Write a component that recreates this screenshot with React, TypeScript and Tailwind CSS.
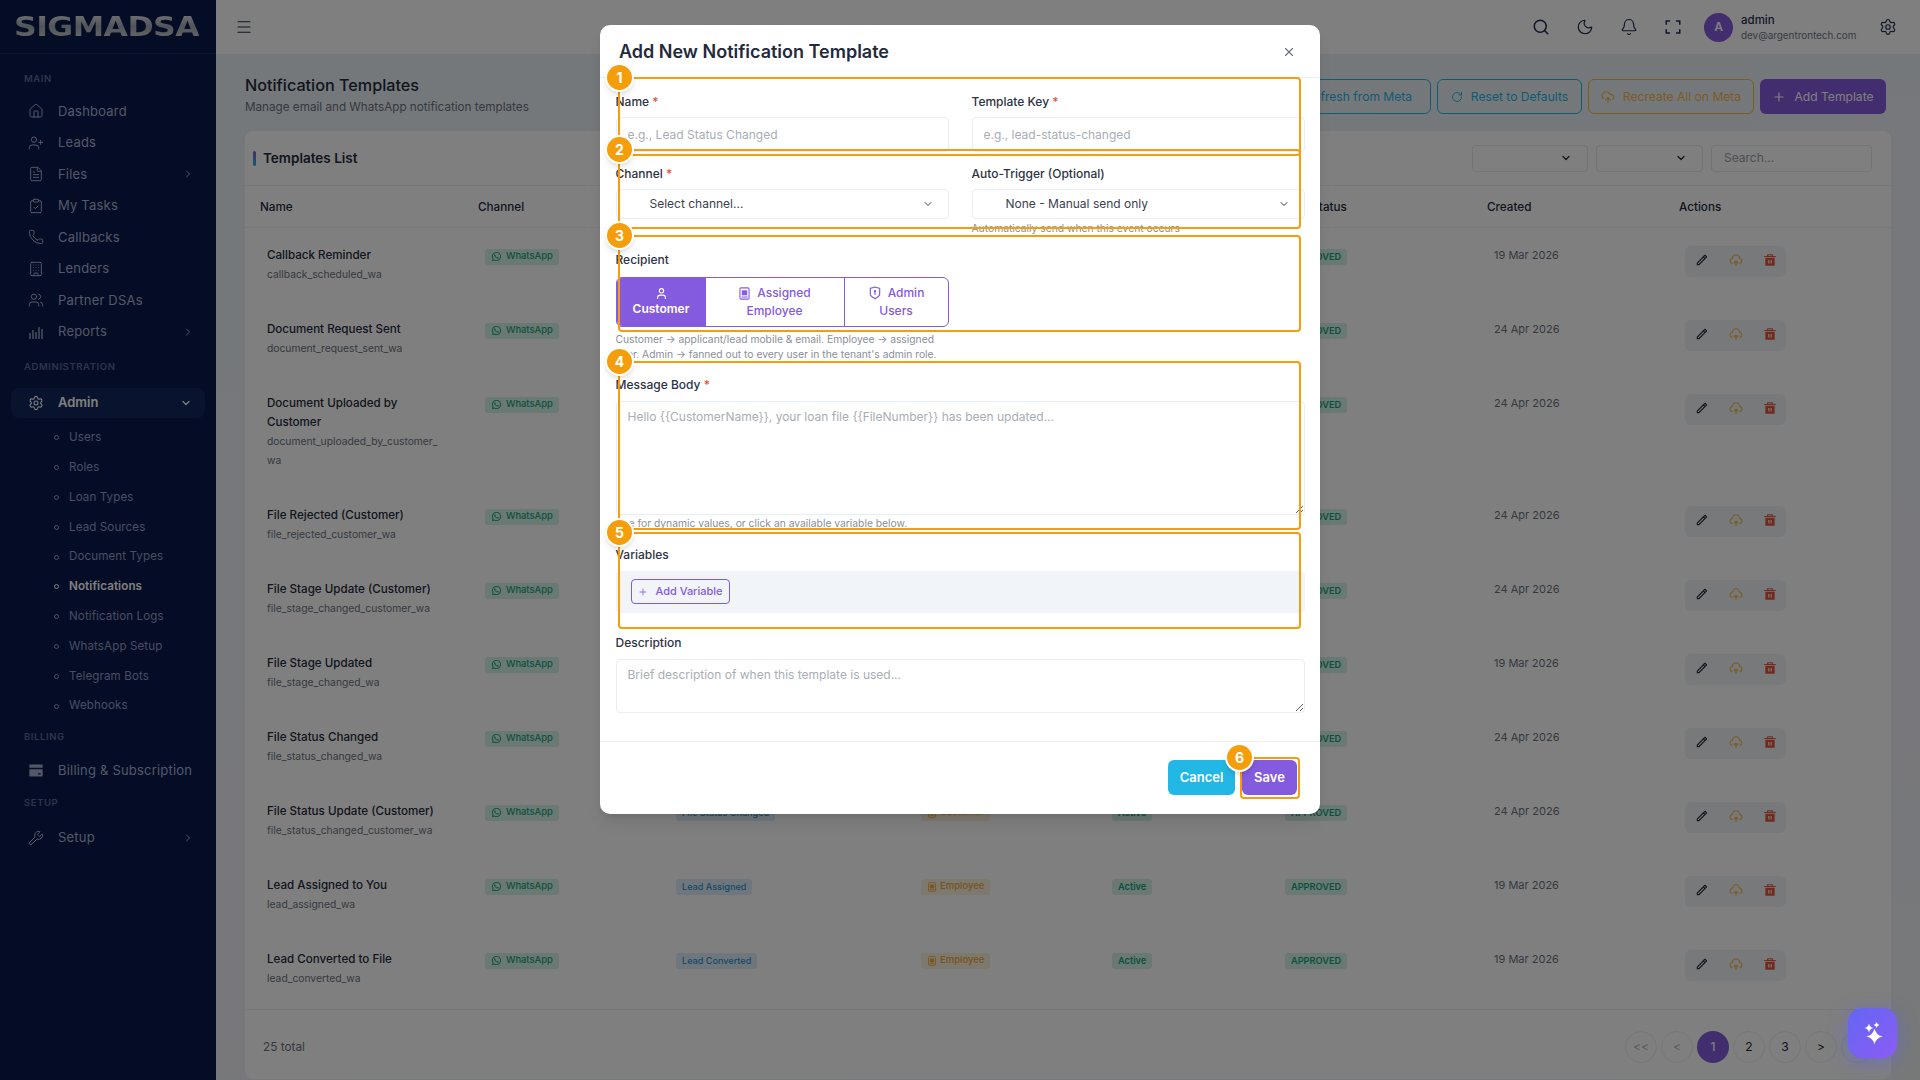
import React from "react";
import {
  House, UserPlus, FileText, ClipboardCheck, Phone, Building, Users, Settings, Wrench, ChevronRight, ChevronDown,
  Menu, Search, Moon, Bell, Plus, X, RotateCw, CloudUpload, RefreshCw, User,
} from "lucide-react";
import { RiWhatsappLine, RiPencilLine, RiUploadCloud2Line, RiDeleteBin5Fill, RiBankCardFill, RiFullscreenLine, RiShieldKeyholeLine } from "react-icons/ri";

function Bars() {
  return (
    <svg width="16" height="16" viewBox="0 0 16 16" fill="none" stroke="currentColor" strokeWidth="1.3">
      <path d="M2 15V9M5 15V6M8 15V8M11 15V3M14 15V5" />
    </svg>
  );
}

function IdBadge({ size = 12 }: { size?: number }) {
  return (
    <svg width={size} height={size} viewBox="0 0 12 12" fill="none" stroke="currentColor" strokeWidth="1">
      <rect x="1.8" y="0.8" width="8.4" height="10.4" rx="1" />
      <rect x="4" y="3.6" width="4" height="3.6" fill="currentColor" />
      <path d="M3.2 9.2h5.6" />
    </svg>
  );
}

function star(cx: number, cy: number, r: number) {
  const k = r * 0.18;
  return `M${cx} ${cy - r}Q${cx + k} ${cy - k} ${cx + r} ${cy}Q${cx + k} ${cy + k} ${cx} ${cy + r}Q${cx - k} ${cy + k} ${cx - r} ${cy}Q${cx - k} ${cy - k} ${cx} ${cy - r}Z`;
}

function SectionLabel({ text, cls }: { text: string; cls: string }) {
  return <div className={`h-4 leading-4 pl-6 text-[9.5px] font-semibold tracking-[0.6px] text-[#5c6a92] ${cls}`}>{text}</div>;
}

function NavItem({ icon, text, chevron }: { icon: React.ReactNode; text: string; chevron?: boolean }) {
  return (
    <div className="h-[31.5px] flex items-center pl-7 pr-[22px] text-[#a4b1cf] text-[13px] tracking-[0.2px]">
      <span className="w-4 h-4 flex items-center justify-center">{icon}</span>
      <span className="ml-[14px] flex-1 whitespace-nowrap">{text}</span>
      {chevron && <ChevronRight size={12} />}
    </div>
  );
}

function SubItem({ text, active }: { text: string; active?: boolean }) {
  return (
    <div className={`h-[29.8px] flex items-center pl-[54px] text-[11.6px] tracking-[0.1px] ${active ? "text-white font-semibold" : "text-[#8e9cc2]"}`}>
      <span className={`w-[5px] h-[5px] rounded-full border ${active ? "border-white" : "border-[#8e9cc2]"}`} />
      <span className="ml-[10px]">{text}</span>
    </div>
  );
}

function Sidebar() {
  return (
    <aside className="w-[216px] shrink-0 h-full bg-[#0b1a4c]">
      <div className="h-[54px] border-b border-[#1c2b5c] flex items-center pl-[14px]">
        <span className="[font-family:'DejaVu_Sans',sans-serif] font-bold text-[27px] leading-none tracking-[-0.5px] origin-left scale-x-[1.17] text-transparent bg-clip-text bg-[linear-gradient(180deg,#e4e8ec_0%,#a2a9b1_50%,#d0d4d8_100%)]">
          SIGMADSA
        </span>
      </div>
      <div className="pt-[17px]">
        <SectionLabel text="MAIN" cls="mb-[8.5px]" />
        <NavItem icon={<House size={16} strokeWidth={1.5} />} text="Dashboard" />
        <NavItem icon={<UserPlus size={16} strokeWidth={1.5} />} text="Leads" />
        <NavItem icon={<FileText size={16} strokeWidth={1.5} />} text="Files" chevron />
        <NavItem icon={<ClipboardCheck size={16} strokeWidth={1.5} />} text="My Tasks" />
        <NavItem icon={<Phone size={16} strokeWidth={1.5} />} text="Callbacks" />
        <NavItem icon={<Building size={16} strokeWidth={1.5} />} text="Lenders" />
        <NavItem icon={<Users size={16} strokeWidth={1.5} />} text="Partner DSAs" />
        <NavItem icon={<Bars />} text="Reports" chevron />
        <SectionLabel text="ADMINISTRATION" cls="mt-[11.5px]" />
        <div className="mt-[13px] mx-[11px] h-[30px] rounded-lg bg-[#15265a] flex items-center pl-[17px] pr-[13px] text-white text-[13px] font-semibold">
          <Settings size={16} strokeWidth={1.6} />
          <span className="ml-[14px] flex-1">Admin</span>
          <ChevronDown size={12} strokeWidth={2.5} />
        </div>
        <div className="mt-[5px]">
          {["Users", "Roles", "Loan Types", "Lead Sources", "Document Types"].map((t) => <SubItem key={t} text={t} />)}
          <SubItem text="Notifications" active />
          {["Notification Logs", "WhatsApp Setup", "Telegram Bots", "Webhooks"].map((t) => <SubItem key={t} text={t} />)}
        </div>
        <SectionLabel text="BILLING" cls="mt-[8px]" />
        <div className="mt-[10px]"><NavItem icon={<RiBankCardFill size={17} />} text="Billing & Subscription" /></div>
        <SectionLabel text="SETUP" cls="mt-[9px]" />
        <div className="mt-[11px]"><NavItem icon={<Wrench size={16} strokeWidth={1.5} />} text="Setup" chevron /></div>
      </div>
    </aside>
  );
}

function Topbar() {
  return (
    <header className="h-[54px] shrink-0 bg-white flex items-center pl-[19px] pr-[23px] text-[#1f2d50]">
      <Menu size={18} strokeWidth={1.5} />
      <div className="flex-1" />
      <div className="flex items-center gap-[26px]">
        <Search size={18} strokeWidth={2} />
        <Moon size={18} strokeWidth={1.6} />
        <Bell size={18} strokeWidth={1.6} />
        <RiFullscreenLine size={18} />
      </div>
      <div className="ml-[22px] w-[29px] h-[29px] rounded-full bg-[#845adf] text-white text-[12px] font-semibold flex items-center justify-center">A</div>
      <div className="ml-[8px] w-[138px]">
        <div className="text-[11.5px] leading-[15px] font-medium text-[#1f2d50]">admin</div>
        <div className="text-[9.9px] leading-[14px] text-[#6c7689]">dev@argentrontech.com</div>
      </div>
      <Settings size={18} strokeWidth={1.6} />
    </header>
  );
}

type Row = { name: string; key: string; cat: string; rec: string; date: string };
const rows: Row[] = [
  { name: "Callback Reminder", key: "callback_scheduled_wa", cat: "Callback Scheduled", rec: "Employee", date: "19 Mar 2026" },
  { name: "Document Request Sent", key: "document_request_sent_wa", cat: "Document Requested", rec: "Customer", date: "24 Apr 2026" },
  { name: "Document Uploaded by Customer", key: "document_uploaded_by_customer_wa", cat: "Document Uploaded", rec: "Employee", date: "24 Apr 2026" },
  { name: "File Rejected (Customer)", key: "file_rejected_customer_wa", cat: "File Rejected", rec: "Customer", date: "24 Apr 2026" },
  { name: "File Stage Update (Customer)", key: "file_stage_changed_customer_wa", cat: "File Stage Changed", rec: "Customer", date: "24 Apr 2026" },
  { name: "File Stage Updated", key: "file_stage_changed_wa", cat: "File Stage Changed", rec: "Employee", date: "19 Mar 2026" },
  { name: "File Status Changed", key: "file_status_changed_wa", cat: "File Status Changed", rec: "Employee", date: "24 Apr 2026" },
  { name: "File Status Update (Customer)", key: "file_status_changed_customer_wa", cat: "File Status Changed", rec: "Customer", date: "24 Apr 2026" },
  { name: "Lead Assigned to You", key: "lead_assigned_wa", cat: "Lead Assigned", rec: "Employee", date: "19 Mar 2026" },
  { name: "Lead Converted to File", key: "lead_converted_wa", cat: "Lead Converted", rec: "Employee", date: "19 Mar 2026" },
];

const gridCols = "grid grid-cols-[218px_191px_246px_191px_174px_207px_192px_227px]";

function TableRow({ r }: { r: Row }) {
  return (
    <div className={`${gridCols} items-start`}>
      <div className="pl-[22px] pr-[22px] py-[18px] leading-[19px]">
        <div className="text-[11.6px] font-medium text-[#232a3b]">{r.name}</div>
        <div className="text-[10.3px] text-[#6c7280] break-all">{r.key}</div>
      </div>
      <div className="pl-[22px] pt-[20.5px] flex">
        <span className="flex h-4 items-center gap-[4px] rounded-[3px] bg-[#d4f2e9] pl-[6px] pr-[6px] text-[9.4px] font-medium text-[#15a37b]">
          <RiWhatsappLine size={11} />WhatsApp
        </span>
      </div>
      <div className="pl-[22px] pt-[20.5px] flex">
        <span className="flex h-4 items-center rounded-[3px] bg-[#deeffa] px-[6px] text-[9.1px] font-medium text-[#2f8fd0]">{r.cat}</span>
      </div>
      <div className="pl-[21px] pt-[20.5px] flex">
        <span className="flex h-4 items-center gap-[3px] rounded-[3px] bg-[#fdf3dd] px-[6px] text-[9.5px] font-medium text-[#f0a63c]">
          <IdBadge size={10} />{r.rec}
        </span>
      </div>
      <div className="pl-[21px] pt-[20.5px] flex">
        <span className="flex h-4 items-center rounded-[3px] bg-[#d4f2e9] px-[6px] text-[9.2px] font-semibold text-[#15a37b]">Active</span>
      </div>
      <div className="pl-[20px] pt-[20.5px] flex">
        <span className="flex h-4 items-center rounded-[3px] bg-[#d4f2e9] px-[6px] text-[9.2px] font-semibold text-[#15a37b]">APPROVED</span>
      </div>
      <div className="pl-[22px] pt-[17.5px] text-[11px] leading-[19px] text-[#6c7280]">{r.date}</div>
      <div className="pl-[21px] pt-[17.5px]">
        <div className="w-[101px] h-[31px] rounded-md bg-[#f1f3f6] flex items-center justify-between pl-[10px] pr-[9px] pb-[3px]">
          <RiPencilLine size={14} className="text-[#232a3b]" />
          <RiUploadCloud2Line size={14} className="text-[#f5b849]" />
          <RiDeleteBin5Fill size={14} className="text-[#e6533c]" />
        </div>
      </div>
    </div>
  );
}

function PageBtn({ children, active, dim }: { children: React.ReactNode; active?: boolean; dim?: boolean }) {
  return (
    <div className={`w-8 h-8 rounded-full flex items-center justify-center text-[12px] ${active ? "bg-[#845adf] text-white font-medium" : "border border-[#eceef2]"} ${dim ? "text-[#b6bac2]" : active ? "" : "text-[#232a3b]"}`}>
      {children}
    </div>
  );
}

function Page() {
  const btn = "h-[35px] pt-px rounded-md flex items-center justify-center gap-[8px]";
  return (
    <div className="flex-1 min-w-0 h-full flex flex-col">
      <Topbar />
      <main className="flex-1 min-h-0 px-[29px] overflow-hidden bg-[linear-gradient(170deg,#e9f1f7_0%,#f0eff8_70%,#eef3f3_100%)]">
        <div className="flex justify-between items-start pt-[19px] pr-[5px] mb-[14px]">
          <div>
            <h1 className="text-[16.2px] leading-6 font-medium text-[#232a3b]">Notification Templates</h1>
            <p className="text-[11.7px] leading-5 text-[#6c7280]">Manage email and WhatsApp notification templates</p>
          </div>
          <div className="flex gap-[6px] mt-[6px] text-[12.1px]">
            <button className={`${btn} w-[165px] border border-[#23b7e5] text-[#23b7e5]`}><RefreshCw size={13} />Refresh from Meta</button>
            <button className={`${btn} w-[145px] border border-[#23b7e5] text-[#23b7e5]`}><RotateCw size={12} />Reset to Defaults</button>
            <button className={`${btn} w-[166px] border border-[#f5b849] text-[#f5b849]`}><CloudUpload size={14} />Recreate All on Meta</button>
            <button className={`${btn} w-[126px] bg-[#845adf] text-white`}><Plus size={14} />Add Template</button>
          </div>
        </div>
        <section className="bg-white rounded-lg">
          <div className="h-[55px] border-b border-[#eef0f3] flex items-center pl-2 pr-[19px]">
            <span className="w-[3px] h-[15px] rounded-sm bg-[linear-gradient(180deg,#845adf,#23b7e5)]" />
            <span className="ml-[7px] text-[13.5px] font-semibold text-[#232a3b]">Templates List</span>
            <div className="flex-1" />
            <div className="flex gap-2">
              <div className="w-[116px] h-[27px] rounded border border-[#e6e8ec] flex items-center justify-end pr-[15px]"><ChevronDown size={12} strokeWidth={2.5} className="text-[#232a3b]" /></div>
              <div className="w-[107px] h-[27px] rounded border border-[#e6e8ec] flex items-center justify-end pr-[15px]"><ChevronDown size={12} strokeWidth={2.5} className="text-[#232a3b]" /></div>
              <div className="w-[161px] h-[27px] rounded border border-[#e6e8ec] flex items-center pl-[12px] text-[12px] text-[#9a9ea8]">Search...</div>
            </div>
          </div>
          <div className={`${gridCols} h-[42px] items-center pt-[2px] border-b border-[#eef0f3] text-[11.7px] font-medium text-[#232a3b]`}>
            {["Name", "Channel", "Event", "Recipient", "Status", "Meta Status", "Created", "Actions"].map((h) => (
              <div key={h} className="pl-[15px]">{h}</div>
            ))}
          </div>
          <div className="mb-[3px]">
            {rows.map((r) => <TableRow key={r.key} r={r} />)}
          </div>
          <div className="border-t border-[#eef0f3] flex justify-between pl-[18px] pr-[18px] pt-[21px] pb-[16px]">
            <span className="text-[11.8px] leading-8 text-[#6c7280]">25 total</span>
            <div className="flex gap-[4px]">
              <PageBtn dim>&lt;&lt;</PageBtn>
              <PageBtn dim>&lt;</PageBtn>
              <PageBtn active>1</PageBtn>
              <PageBtn>2</PageBtn>
              <PageBtn>3</PageBtn>
              <PageBtn>&gt;</PageBtn>
              <PageBtn>&gt;&gt;</PageBtn>
            </div>
          </div>
        </section>
      </main>
    </div>
  );
}

function Label({ text, req }: { text: string; req?: boolean }) {
  return (
    <div className="h-4 leading-4 text-[12px] font-medium text-[#2c3345]">
      {text}{req && <span className="text-[#e6533c]"> *</span>}
    </div>
  );
}

function Field({ text, req, ph }: { text: string; req?: boolean; ph: string }) {
  return (
    <div>
      <Label text={text} req={req} />
      <input readOnly placeholder={ph} className="mt-[7px] w-full h-[35px] rounded border border-[#e9edf6] px-[11px] text-[12px] outline-none placeholder:text-[#a9adb5]" />
    </div>
  );
}

function SelectBox({ text }: { text: string }) {
  return (
    <div className="mt-[7px] h-[30px] rounded border border-[#e9edf6] flex items-center pl-[33px] pr-[14px] text-[12px] text-[#3a4150]">
      <span className="flex-1">{text}</span>
      <ChevronDown size={12} strokeWidth={2} />
    </div>
  );
}

function Dialog() {
  return (
    <div className="w-[720px] h-[789px] mt-[25px] bg-white rounded-[10px] shadow-lg flex flex-col">
      <div className="h-[53px] border-b border-[#eef0f3] flex items-center pl-[19px] pr-[24px]">
        <h2 className="flex-1 text-[18px] font-semibold text-[#232a3b]">Add New Notification Template</h2>
        <X size={14} className="text-[#6c7280] mt-px" />
      </div>
      <div className="px-[15.5px] pt-[16px] flex-1">
        <div className="grid grid-cols-2 gap-x-[23px]">
          <Field text="Name" req ph="e.g., Lead Status Changed" />
          <Field text="Template Key" req ph="e.g., lead-status-changed" />
        </div>
        <div className="grid grid-cols-2 gap-x-[23px] mt-[14px] items-start">
          <div><Label text="Channel" req /><SelectBox text="Select channel..." /></div>
          <div>
            <Label text="Auto-Trigger (Optional)" />
            <SelectBox text="None - Manual send only" />
            <div className="mt-[2px] text-[10.3px] leading-[14px] text-[#8a8f99]">Automatically send when this event occurs</div>
          </div>
        </div>
        <div className="mt-[17px]"><Label text="Recipient" /></div>
        <div className="mt-[9px] w-[333px] h-[50px] rounded-md border border-[#845adf] flex text-[12px] font-medium text-[#845adf] overflow-hidden">
          <div className="w-[89px] shrink-0 bg-[#845adf] text-white flex flex-col items-center justify-center font-semibold leading-[18px]">
            <User size={13} />
            <span>Customer</span>
          </div>
          <div className="w-[139px] shrink-0 border-r border-[#845adf] flex flex-col items-center justify-center leading-[18px]">
            <span className="flex items-center gap-[6px]"><IdBadge size={13} />Assigned</span>
            <span>Employee</span>
          </div>
          <div className="flex-1 flex flex-col items-center justify-center leading-[18px]">
            <span className="flex items-center gap-[6px]"><RiShieldKeyholeLine size={14} />Admin</span>
            <span>Users</span>
          </div>
        </div>
        <p className="mt-[4.5px] w-[333px] text-[10.3px] leading-[15px] text-[#8a8f99]">
          Customer → applicant/lead mobile &amp; email. Employee → assigned user. Admin → fanned out to every user in the tenant's admin role.
        </p>
        <div className="mt-[15.5px]"><Label text="Message Body" req /></div>
        <textarea readOnly placeholder="Hello {{CustomerName}}, your loan file {{FileNumber}} has been updated..." className="mt-2 block w-full h-[114px] rounded border border-[#e9edf6] px-[11px] py-[6px] text-[12px] outline-none placeholder:text-[#a9adb5]" />
        <div className="mt-[1px] text-[10.3px] leading-[15px] text-[#8a8f99]">Use for dynamic values, or click an available variable below.</div>
        <div className="mt-[15.5px]"><Label text="Variables" /></div>
        <div className="mt-2 h-[42px] rounded bg-[#f1f4f8] flex items-center pl-[15.5px]">
          <button className="h-[25px] w-[99px] rounded border border-[#845adf] text-[#845adf] text-[11px] font-medium flex items-center justify-center gap-[7px]">
            <Plus size={10} />Add Variable
          </button>
        </div>
        <div className="mt-[22px]"><Label text="Description" /></div>
        <textarea readOnly placeholder="Brief description of when this template is used..." className="mt-2 block w-full h-[54px] rounded border border-[#e9edf6] px-[11px] py-[6px] text-[12px] outline-none placeholder:text-[#a9adb5]" />
      </div>
      <div className="h-[73px] border-t border-[#eef0f3] flex justify-end gap-[7px] pt-[18px] pr-[23px]">
        <button className="h-[35px] w-[67px] rounded-md bg-[#23b7e5] text-white text-[13px] font-semibold">Cancel</button>
        <button className="h-[35px] w-[55px] rounded-md bg-[#845adf] text-white text-[13px] font-semibold">Save</button>
      </div>
    </div>
  );
}

function Marker({ n, cls }: { n: number; cls: string }) {
  return (
    <div className={`absolute w-[29px] h-[29px] rounded-full bg-[#f59e0b] border-2 border-white shadow-md text-white text-[14px] font-bold flex items-center justify-center ${cls}`}>{n}</div>
  );
}

function Annotations() {
  const box = "absolute border-2 border-[#f59e0b] rounded-[4px]";
  return (
    <>
      <div className={`${box} left-[618px] top-[77px] w-[683px] h-[79px]`} />
      <div className={`${box} left-[618px] top-[149px] w-[683px] h-[80px]`} />
      <div className={`${box} left-[618px] top-[235px] w-[683px] h-[97px]`} />
      <div className={`${box} left-[618px] top-[361px] w-[683px] h-[169px]`} />
      <div className={`${box} left-[618px] top-[532px] w-[683px] h-[97px]`} />
      <div className={`${box} left-[1240px] top-[757px] w-[60px] h-[42px]`} />
      <Marker n={1} cls="left-[605px] top-[63px]" />
      <Marker n={2} cls="left-[605px] top-[135px]" />
      <Marker n={3} cls="left-[605px] top-[221px]" />
      <Marker n={4} cls="left-[605px] top-[347px]" />
      <Marker n={5} cls="left-[605px] top-[518px]" />
      <Marker n={6} cls="left-[1225px] top-[743px]" />
    </>
  );
}

function Fab() {
  return (
    <div className="absolute left-[1848px] top-[1008px] w-[49px] h-[50px] rounded-[14px] bg-[linear-gradient(135deg,#6366f1,#8b5cf6)] shadow-[0_4px_18px_rgba(99,102,241,0.55)] flex items-center justify-center">
      <svg width="24" height="24" viewBox="0 0 24 24" fill="white">
        <path d={star(13.5, 15.5, 8)} />
        <path d={star(8, 7, 4.5)} />
        <path d={star(15.5, 4, 3)} />
      </svg>
    </div>
  );
}

export default function App() {
  return (
    <div className="relative w-[1920px] h-[1080px] overflow-hidden flex [font-family:Inter,sans-serif]">
      <Sidebar />
      <Page />
      <div className="absolute inset-0 bg-black/50 flex justify-center items-start">
        <Dialog />
      </div>
      <Annotations />
      <Fab />
    </div>
  );
}
